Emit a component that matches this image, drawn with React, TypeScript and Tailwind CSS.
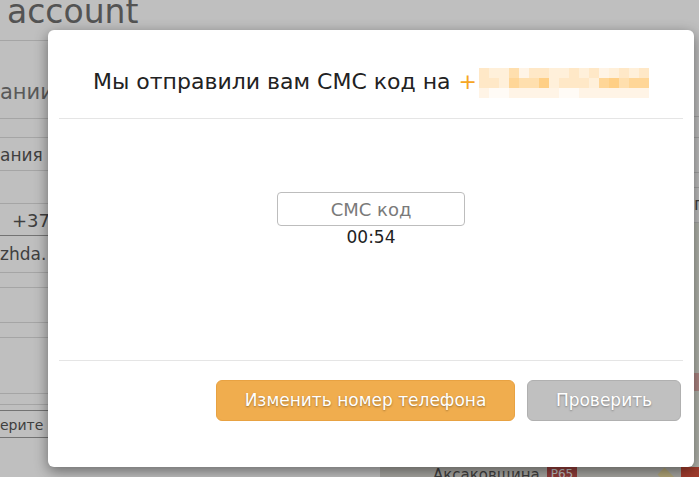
import React from 'react'

// pixelated phone number: 3 rows x 17 cells, values are shade levels
const PHONE_ROWS = [
  [2, 1, 1, 3, 0, 2, 2, 1, 1, 2, 1, 2, 0, 1, 2, 1, 2],
  [2, 2, 1, 4, 3, 3, 5, 1, 2, 2, 2, 1, 4, 5, 3, 4, 4],
  [0, 9, 9, 0, 0, 0, 0, 0, 9, 9, 0, 0, 0, 0, 0, 0, 0],
]

const SHADES: Record<number, string> = {
  9: 'bg-[#fffbf6]',
  0: 'bg-[#fff4e6]',
  1: 'bg-[#fff0da]',
  2: 'bg-[#ffe8c7]',
  3: 'bg-[#ffdfae]',
  4: 'bg-[#ffd697]',
  5: 'bg-[#ffcf85]',
}

const LEFT_ROWS = [
  { h: 'h-[78px]', text: 'ании', cls: 'text-[21px] pt-[36px] text-[#777]' },
  { h: 'h-[19px]', text: '', cls: '' },
  { h: 'h-[33px]', text: 'ания', cls: 'text-[17px] pt-[5px] text-[#555]' },
  { h: 'h-[33px]', text: '', cls: '' },
  { h: 'h-[32px]', text: '+37', cls: 'text-[18px] pt-[3px] pl-[12px] text-[#555]' },
  { h: 'h-[37px]', text: 'zhda.', cls: 'text-[17px] pt-[6px] text-[#555]', dark: true },
  { h: 'h-[15px]', text: '', cls: '' },
  { h: 'h-[35px]', text: '', cls: '' },
  { h: 'h-[15px]', text: '', cls: '' },
  { h: 'h-[56px]', text: '', cls: '' },
  { h: 'h-[11px]', text: '', cls: '' },
  { h: 'h-[6px]', text: '', cls: '' },
  { h: 'h-[27px]', text: 'ерите с', cls: 'text-[14px] pt-[4px] text-[#555]', dark: true },
  { h: 'h-[6px]', text: '', cls: '', dark: true },
]

function BackgroundPage() {
  return (
    <div className="flex h-full w-full flex-col bg-white font-['DejaVu_Sans',sans-serif]">
      <div className="h-[40px] shrink-0 overflow-hidden pl-[7px] text-[33px] leading-[24px] text-[#6f6f6f]">account</div>
      <div className="flex min-h-0 flex-1">
        <div className="w-[380px] shrink-0">
          {LEFT_ROWS.map((r, i) => (
            <div
              key={i}
              className={`${r.h} overflow-hidden whitespace-nowrap border-t ${r.dark ? 'border-[#9a9a9a]' : 'border-[#dcdcdc]'} ${r.cls}`}
            >
              {r.text}
            </div>
          ))}
        </div>
        <div className="flex min-w-0 flex-1 flex-col">
          <div className="h-[77px] border-b border-[#dcdcdc]" />
          <div className="h-[21px] border-b border-[#dcdcdc]" />
          <div className="h-[35px] border-b border-[#dcdcdc]" />
          <div className="h-[15px] border-b border-[#dcdcdc]" />
          <div className="h-[35px] border-b border-[#dcdcdc] pl-[314px] pt-[4px] text-[17px] text-[#555]">п</div>
          <div className="relative flex-1 bg-[#eef0e6]">
            <div className="absolute right-0 top-[150px] h-[18px] w-[20px] bg-[#e8b4b0]" />
            <div className="absolute bottom-0 left-0 right-0 flex h-[10px] items-start gap-[7px] overflow-hidden bg-[#dedcd6] pl-[53px] text-[15px] leading-[15px] text-[#555]">
              <span className="mt-[1px]">Аксаковщина</span>
              <span className="bg-[#c0504d] px-[4px] text-[12px] text-white">Р65</span>
              <span className="ml-[75px] mt-[4px] h-[10px] w-[14px] rotate-45 bg-[#ecdca0]" />
              <span className="ml-auto h-[10px] w-[18px] bg-[#d8503c]" />
            </div>
          </div>
        </div>
      </div>
    </div>
  )
}

function SmsModal() {
  return (
    <div className="absolute left-[48px] top-[30px] flex h-[437px] w-[646px] flex-col rounded-[6px] bg-white px-[11px] font-['DejaVu_Sans',sans-serif] shadow-[0_4px_14px_rgba(0,0,0,0.45)]">
      <div className="flex h-[89px] shrink-0 items-start justify-center border-b border-[#e5e5e5] pt-[36px]">
        <div className="flex items-center text-[22px] leading-[30px] text-[#222]">
          <span>Мы отправили вам СМС код на</span>
          <span className="ml-[8px] text-[#f6a623]">+</span>
          <div className="ml-[2px] mt-[2px] grid grid-cols-[repeat(17,10px)]">
            {PHONE_ROWS.flatMap((row, y) =>
              row.map((v, x) => <div key={`${y}-${x}`} className={`h-[10px] w-[10px] ${SHADES[v]}`} />)
            )}
          </div>
        </div>
      </div>

      <div className="flex h-[242px] shrink-0 flex-col items-center border-b border-[#e5e5e5] pt-[73px]">
        <input
          placeholder="СМС код"
          className="h-[34px] w-[188px] rounded-[4px] border border-[#bdbdbd] text-center text-[18px] text-[#333] outline-none placeholder:text-[#7a7a7a]"
        />
        <div className="mt-[1px] text-[17px] leading-[20px] text-[#222]">00:54</div>
      </div>

      <div className="flex justify-end gap-[12px] pr-[2px] pt-[19px]">
        <button className="h-[41px] w-[299px] rounded-[6px] border border-[#e8a242] bg-[#f0ad4e] text-[17px] text-white [text-shadow:0_1px_2px_rgba(0,0,0,0.35)]">
          Изменить номер телефона
        </button>
        <button className="h-[41px] w-[154px] rounded-[6px] border border-[#b0b0b0] bg-[#c0c0c0] text-[17px] text-white [text-shadow:0_1px_2px_rgba(0,0,0,0.35)]">
          Проверить
        </button>
      </div>
    </div>
  )
}

export default function App() {
  return (
    <div className="relative h-[477px] w-[699px] overflow-hidden">
      <BackgroundPage />
      <div className="absolute inset-0 bg-black/25" />
      <SmsModal />
    </div>
  )
}
